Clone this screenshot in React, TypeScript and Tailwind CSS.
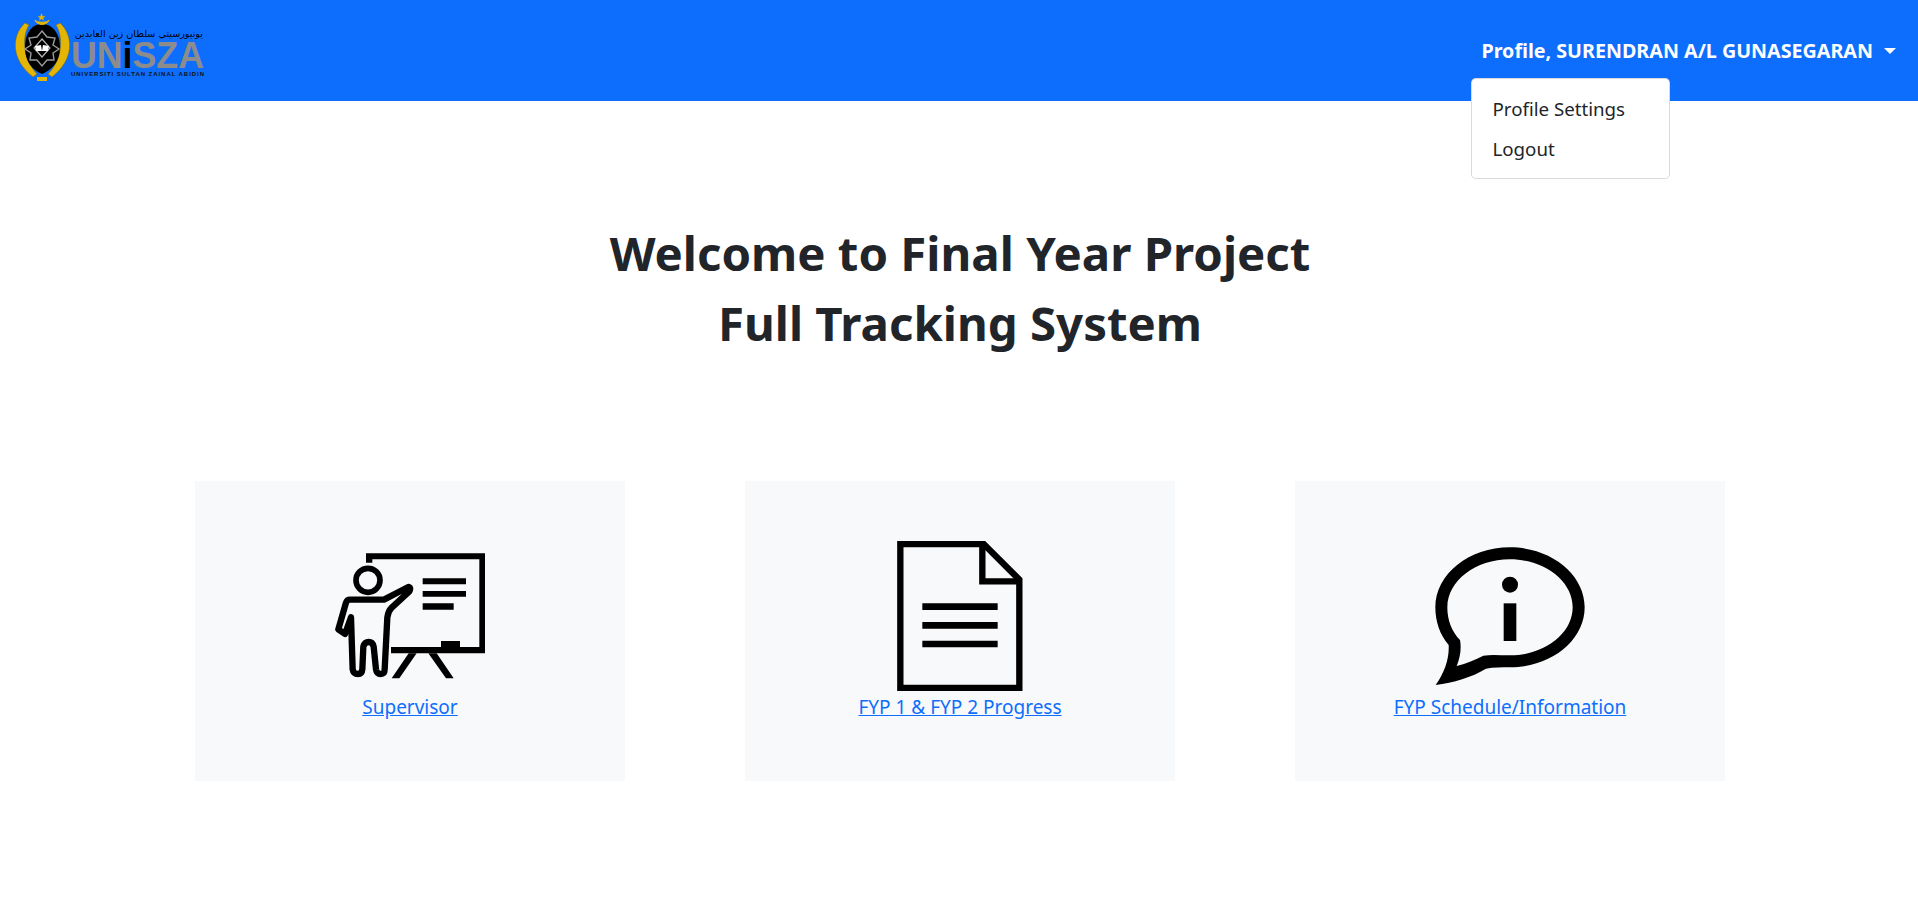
import React from 'react';

const Crest = () => (
  <g>
    <path d="M25 25 C11 38 11 62 33 79 L37 76 C24 62 21 40 29 27 Z" fill="#e3b505" stroke="#7a6400" strokeWidth="0.5" />
    <path d="M60 25 C74 38 74 62 52 79 L48 76 C62 62 64 40 56 27 Z" fill="#e3b505" stroke="#7a6400" strokeWidth="0.5" />
    <path d="M42 26 C53 26 60 36 60 50 C60 63 52 72 42 76 C32 72 25 63 25 50 C25 36 31 26 42 26 Z" fill="#000" />
    <path d="M42 33 L47 39 L55 40 L53 47 L59 51 L53 55 L54 62 L47 62 L42 68 L37 62 L30 62 L31 55 L25 51 L31 47 L29 40 L37 39 Z" fill="none" stroke="#9a9a9a" strokeWidth="1.4" />
    <path d="M42 41 L50 50 L42 59 L34 50 Z" fill="none" stroke="#b5b5b5" strokeWidth="1.2" />
    <path d="M35 48 L41 47 L42 53 L36 53 Z M49 48 L43 47 L42 53 L48 53 Z" fill="#fff" />
    <path d="M35 22 C37 28 47 28 49 22 C47 25 37 25 35 22 Z" fill="#e3b505" stroke="#e3b505" strokeWidth="1" />
    <path d="M41.5 15 L42.7 18.3 L45.5 18.3 L43.2 20 L44 22.5 L41.5 21 L39 22.5 L39.8 20 L37.5 18.3 L40.3 18.3 Z" fill="#e3b505" />
    <rect x="37" y="79" width="10" height="4" fill="#e3b505" />
  </g>
);

const UniszaLogo = () => (
  <svg width="240" height="105" viewBox="0 0 240 105" className="block">
    <Crest />
    <text x="203" y="39" textAnchor="start" direction="rtl" fontSize="9.6" fontFamily="'DejaVu Sans', sans-serif" fill="#000">
      يونيورسيتي سلطان زين العابدين
    </text>
    <text x="71" y="70" fontSize="36" fontWeight="700" fontFamily="'Liberation Sans', sans-serif" fill="#8c8c8c" textLength="133" lengthAdjust="spacingAndGlyphs">
      UN<tspan fill="#000">i</tspan>SZA
    </text>
    <text x="71" y="78" fontSize="6" fontWeight="700" fontFamily="'Liberation Sans', sans-serif" fill="#111" textLength="133" lengthAdjust="spacing">
      UNIVERSITI SULTAN ZAINAL ABIDIN
    </text>
  </svg>
);

const BoardIcon = () => (
  <svg width="150" height="150" viewBox="75 33 450 450" className="block shrink-0">
    <path d="M168 70 H526 V370 H243 V351 H393 V333 H450 V351 H508 V88 H187 V98 H168 Z" fill="#000" />
    <path d="M296 370 L245 445 H268 L320 370 Z M355 370 L408 445 H431 L380 370 Z" fill="#000" />
    <path d="M338 145 H468 V163 H338 Z M338 183 H468 V200 H338 Z M338 220 H431 V239 H338 Z" fill="#000" />
    <circle cx="174" cy="151" r="36" fill="none" stroke="#000" strokeWidth="17" />
    <path
      d="M295 171 L222 209 H120 Q111 209 108 218 L85 298 L105 312 L123 262 L128 418 Q130 432 144 432 Q156 432 157 418 L160 350 Q164 336 176 336 Q188 336 191 350 L198 418 Q200 432 212 432 Q224 432 224 418 L232 262 Q234 244 246 232 L298 184 Q304 172 295 171 Z"
      fill="none"
      stroke="#000"
      strokeWidth="19"
      strokeLinejoin="round"
    />
  </svg>
);

const DocIcon = () => (
  <svg width="150" height="150" viewBox="75 33 450 450" className="block shrink-0">
    <path d="M121 42 H371 L478 149 V474 H121 Z" fill="none" stroke="#000" strokeWidth="19" />
    <path d="M367 46 V154 H478" fill="none" stroke="#000" strokeWidth="19" />
    <path d="M187 220 H413 V240 H187 Z M187 276 H413 V296 H187 Z M187 332 H413 V352 H187 Z" fill="#000" />
  </svg>
);

const InfoIcon = () => (
  <svg width="150" height="150" viewBox="75 33 450 450" className="block shrink-0">
    <path
      fillRule="evenodd"
      d="M77 465 C105 425 118 385 116 345 C90 315 76 275 76 232 C76 133 176 52 300 52 C424 52 524 133 524 232 C524 331 424 412 300 412 C275 412 250 412 228 416 C185 442 130 458 77 465 Z M140 408 C150 385 155 355 150 330 C125 305 112 270 112 232 C112 153 196 88 300 88 C404 88 488 153 488 232 C488 311 404 376 300 376 C272 376 245 373 220 377 C195 390 170 400 140 408 Z"
      fill="#000"
    />
    <circle cx="300" cy="164" r="24" fill="#000" />
    <rect x="281" y="220" width="38" height="113" fill="#000" />
  </svg>
);

const cards = [
  { id: 'supervisor', label: 'Supervisor', icon: <BoardIcon /> },
  { id: 'progress', label: 'FYP 1 & FYP 2 Progress', icon: <DocIcon /> },
  { id: 'schedule', label: 'FYP Schedule/Information', icon: <InfoIcon /> },
];

const App: React.FC = () => {
  return (
    <div className="min-h-[897px] bg-white font-['Noto_Sans',sans-serif] text-[#212529] overflow-hidden">
      <nav className="flex h-[101px] items-center justify-between bg-[#0d6efd] pr-3">
        <UniszaLogo />
        <div className="relative">
          <a href="#" className="flex items-center py-2 pl-[10px] pr-[10px] text-[19.7px] leading-[30px] font-bold text-white">
            Profile, SURENDRAN A/L GUNASEGARAN
            <span className="ml-[11px] h-0 w-0 border-x-[6px] border-t-[6px] border-x-transparent border-t-white" />
          </a>
          <div className="absolute left-0 top-[50px] w-[199px] rounded-[5px] border border-black/15 bg-white pt-[10px] pb-[9px] text-[18.7px]">
            <a href="#" className="block px-5 py-[5px] leading-[30px] text-[#212529]">Profile Settings</a>
            <a href="#" className="block px-5 py-[5px] leading-[30px] text-[#212529]">Logout</a>
          </div>
        </div>
      </nav>

      <main className="pl-[2px]">
        <h1 className="mt-[117px] text-center text-[47.4px] leading-[70px] font-bold">
          Welcome to Final Year Project
          <br />
          Full Tracking System
        </h1>

        <div className="mt-[123px] flex justify-center gap-[120px]">
          {cards.map((card) => (
            <div key={card.id} className="flex h-[300px] w-[430px] flex-col items-center bg-[#f8f9fa] px-[60px] pt-[60px] pb-[58px]">
              {card.icon}
              <a href="#" className="text-[19px] leading-[32px] whitespace-nowrap text-[#0d6efd] underline">{card.label}</a>
            </div>
          ))}
        </div>
      </main>
    </div>
  );
};

export default App;
